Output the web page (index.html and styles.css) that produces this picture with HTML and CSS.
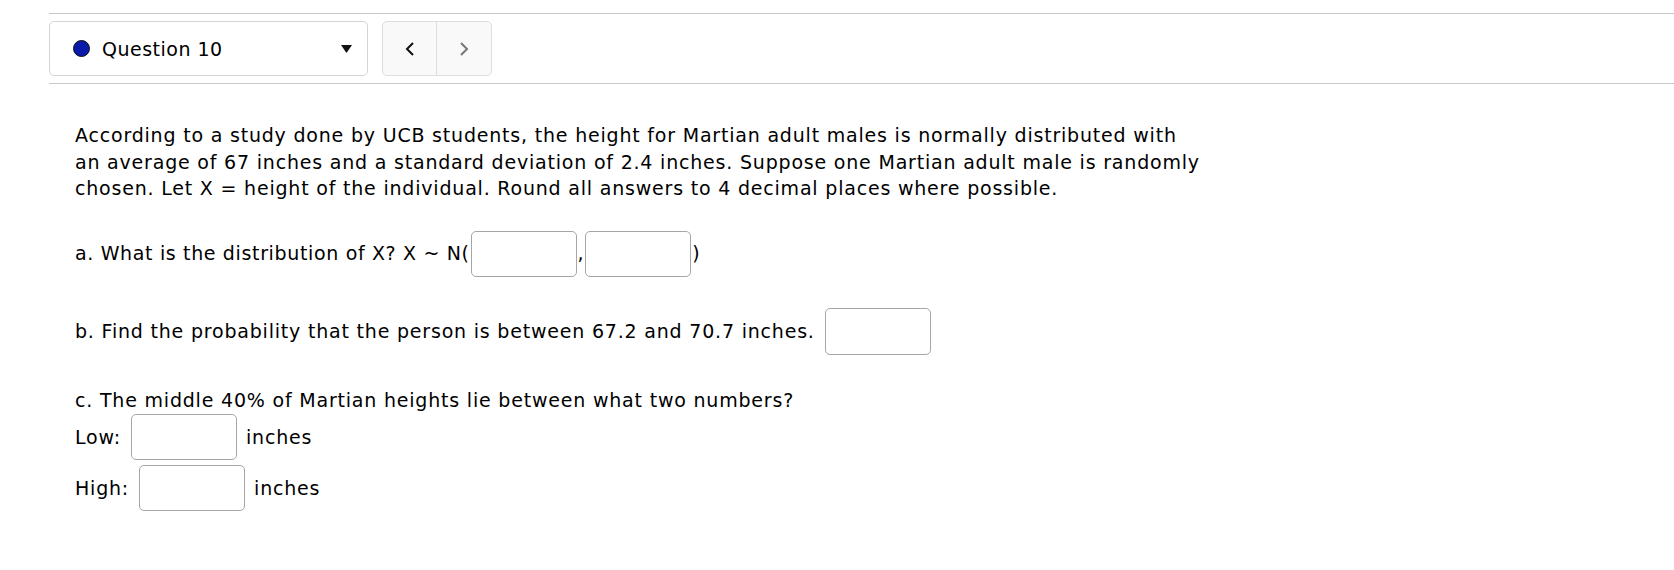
FILE: index.html
```html
<!DOCTYPE html>
<html>
<head>
<meta charset="utf-8">
<link rel="stylesheet" href="styles.css">
</head>
<body>
<div class="toolbar">
  <div class="qselect">
    <span class="dot"></span>
    <span class="qlabel">Question 10</span>
    <svg class="caret" width="11" height="8" viewBox="0 0 11 8"><polygon points="0,0 11,0 5.5,8" fill="#111"/></svg>
  </div>
  <div class="nav">
    <button class="navbtn prev"><svg width="10" height="14" viewBox="0 0 10 14"><polyline points="8,1 2,7 8,13" fill="none" stroke="#111" stroke-width="2"/></svg></button>
    <button class="navbtn next"><svg width="10" height="14" viewBox="0 0 10 14"><polyline points="2,1 8,7 2,13" fill="none" stroke="#777" stroke-width="2"/></svg></button>
  </div>
</div>
<div class="question">
  <p class="intro">According to a study done by UCB students, the height for Martian adult males is normally distributed with an average of 67 inches and a standard deviation of 2.4 inches. Suppose one Martian adult male is randomly chosen. Let X = height of the individual. Round all answers to 4 decimal places where possible.</p>
  <div class="row row-a">
    <span>a. What is the distribution of X? X ~ N(</span><input class="ans tight" type="text"><span>,</span><input class="ans tight" type="text"><span>)</span>
  </div>
  <div class="row row-b">
    <span>b. Find the probability that the person is between 67.2 and 70.7 inches.</span><input class="ans spaced tall" type="text">
  </div>
  <div class="line-c">c. The middle 40% of Martian heights lie between what two numbers?</div>
  <div class="row row-low">
    <span>Low:</span><input class="ans spaced" type="text"><span>inches</span>
  </div>
  <div class="row row-high">
    <span>High:</span><input class="ans spaced" type="text"><span>inches</span>
  </div>
</div>
</body>
</html>
```

FILE: styles.css
```css
html, body {
  margin: 0;
  padding: 0;
  background: #fff;
}
body {
  font-family: "DejaVu Sans", Verdana, sans-serif;
  font-size: 19px;
  letter-spacing: 0.8px;
  color: #000;
}
.toolbar {
  margin: 13px 0 0 49px;
  border-top: 1px solid #c8c8c8;
  border-bottom: 1px solid #c8c8c8;
  padding: 7px 0;
  display: flex;
  gap: 14px;
}
.qselect {
  box-sizing: border-box;
  width: 319px;
  height: 55px;
  border: 1px solid #d4d4d4;
  border-radius: 5px;
  display: flex;
  align-items: center;
  padding: 0 15px 0 23px;
}
.dot {
  box-sizing: border-box;
  width: 17px;
  height: 17px;
  border-radius: 50%;
  background: #0a1aa8;
  border: 1.5px solid #111;
  margin-right: 12px;
}
.qlabel {
  flex: 1;
  letter-spacing: 0.5px;
}
.caret {
  display: block;
}
.nav {
  display: flex;
  height: 55px;
  box-sizing: border-box;
  border: 1px solid #dedede;
  border-radius: 5px;
  background: #f9f9f9;
  overflow: hidden;
}
.navbtn {
  width: 54px;
  height: 100%;
  border: 0;
  background: transparent;
  padding: 0;
  display: flex;
  align-items: center;
  justify-content: center;
}
.navbtn.prev {
  border-right: 1px solid #dedede;
}
.question {
  padding-left: 75px;
  line-height: 26.5px;
}
.intro {
  margin: 38px 0 0 0;
  width: 1128px;
}
.row {
  display: flex;
  align-items: center;
  white-space: pre;
}
.ans {
  box-sizing: border-box;
  width: 106px;
  height: 46px;
  border: 1px solid #a6a6a6;
  border-radius: 5px;
  background: #fff;
  margin: 0;
  padding: 0;
}
.ans.tall {
  height: 47px;
}
.ans.tight {
  margin: 0 1px;
}
.ans.spaced {
  margin: 0 9px 0 10px;
}
.row-a {
  margin-top: 29px;
  letter-spacing: 0.65px;
}
.row-b {
  margin-top: 31px;
}
.line-c {
  margin-top: 32px;
}
.row-low {
  margin-top: 1px;
}
.row-high {
  margin-top: 5px;
}
```
